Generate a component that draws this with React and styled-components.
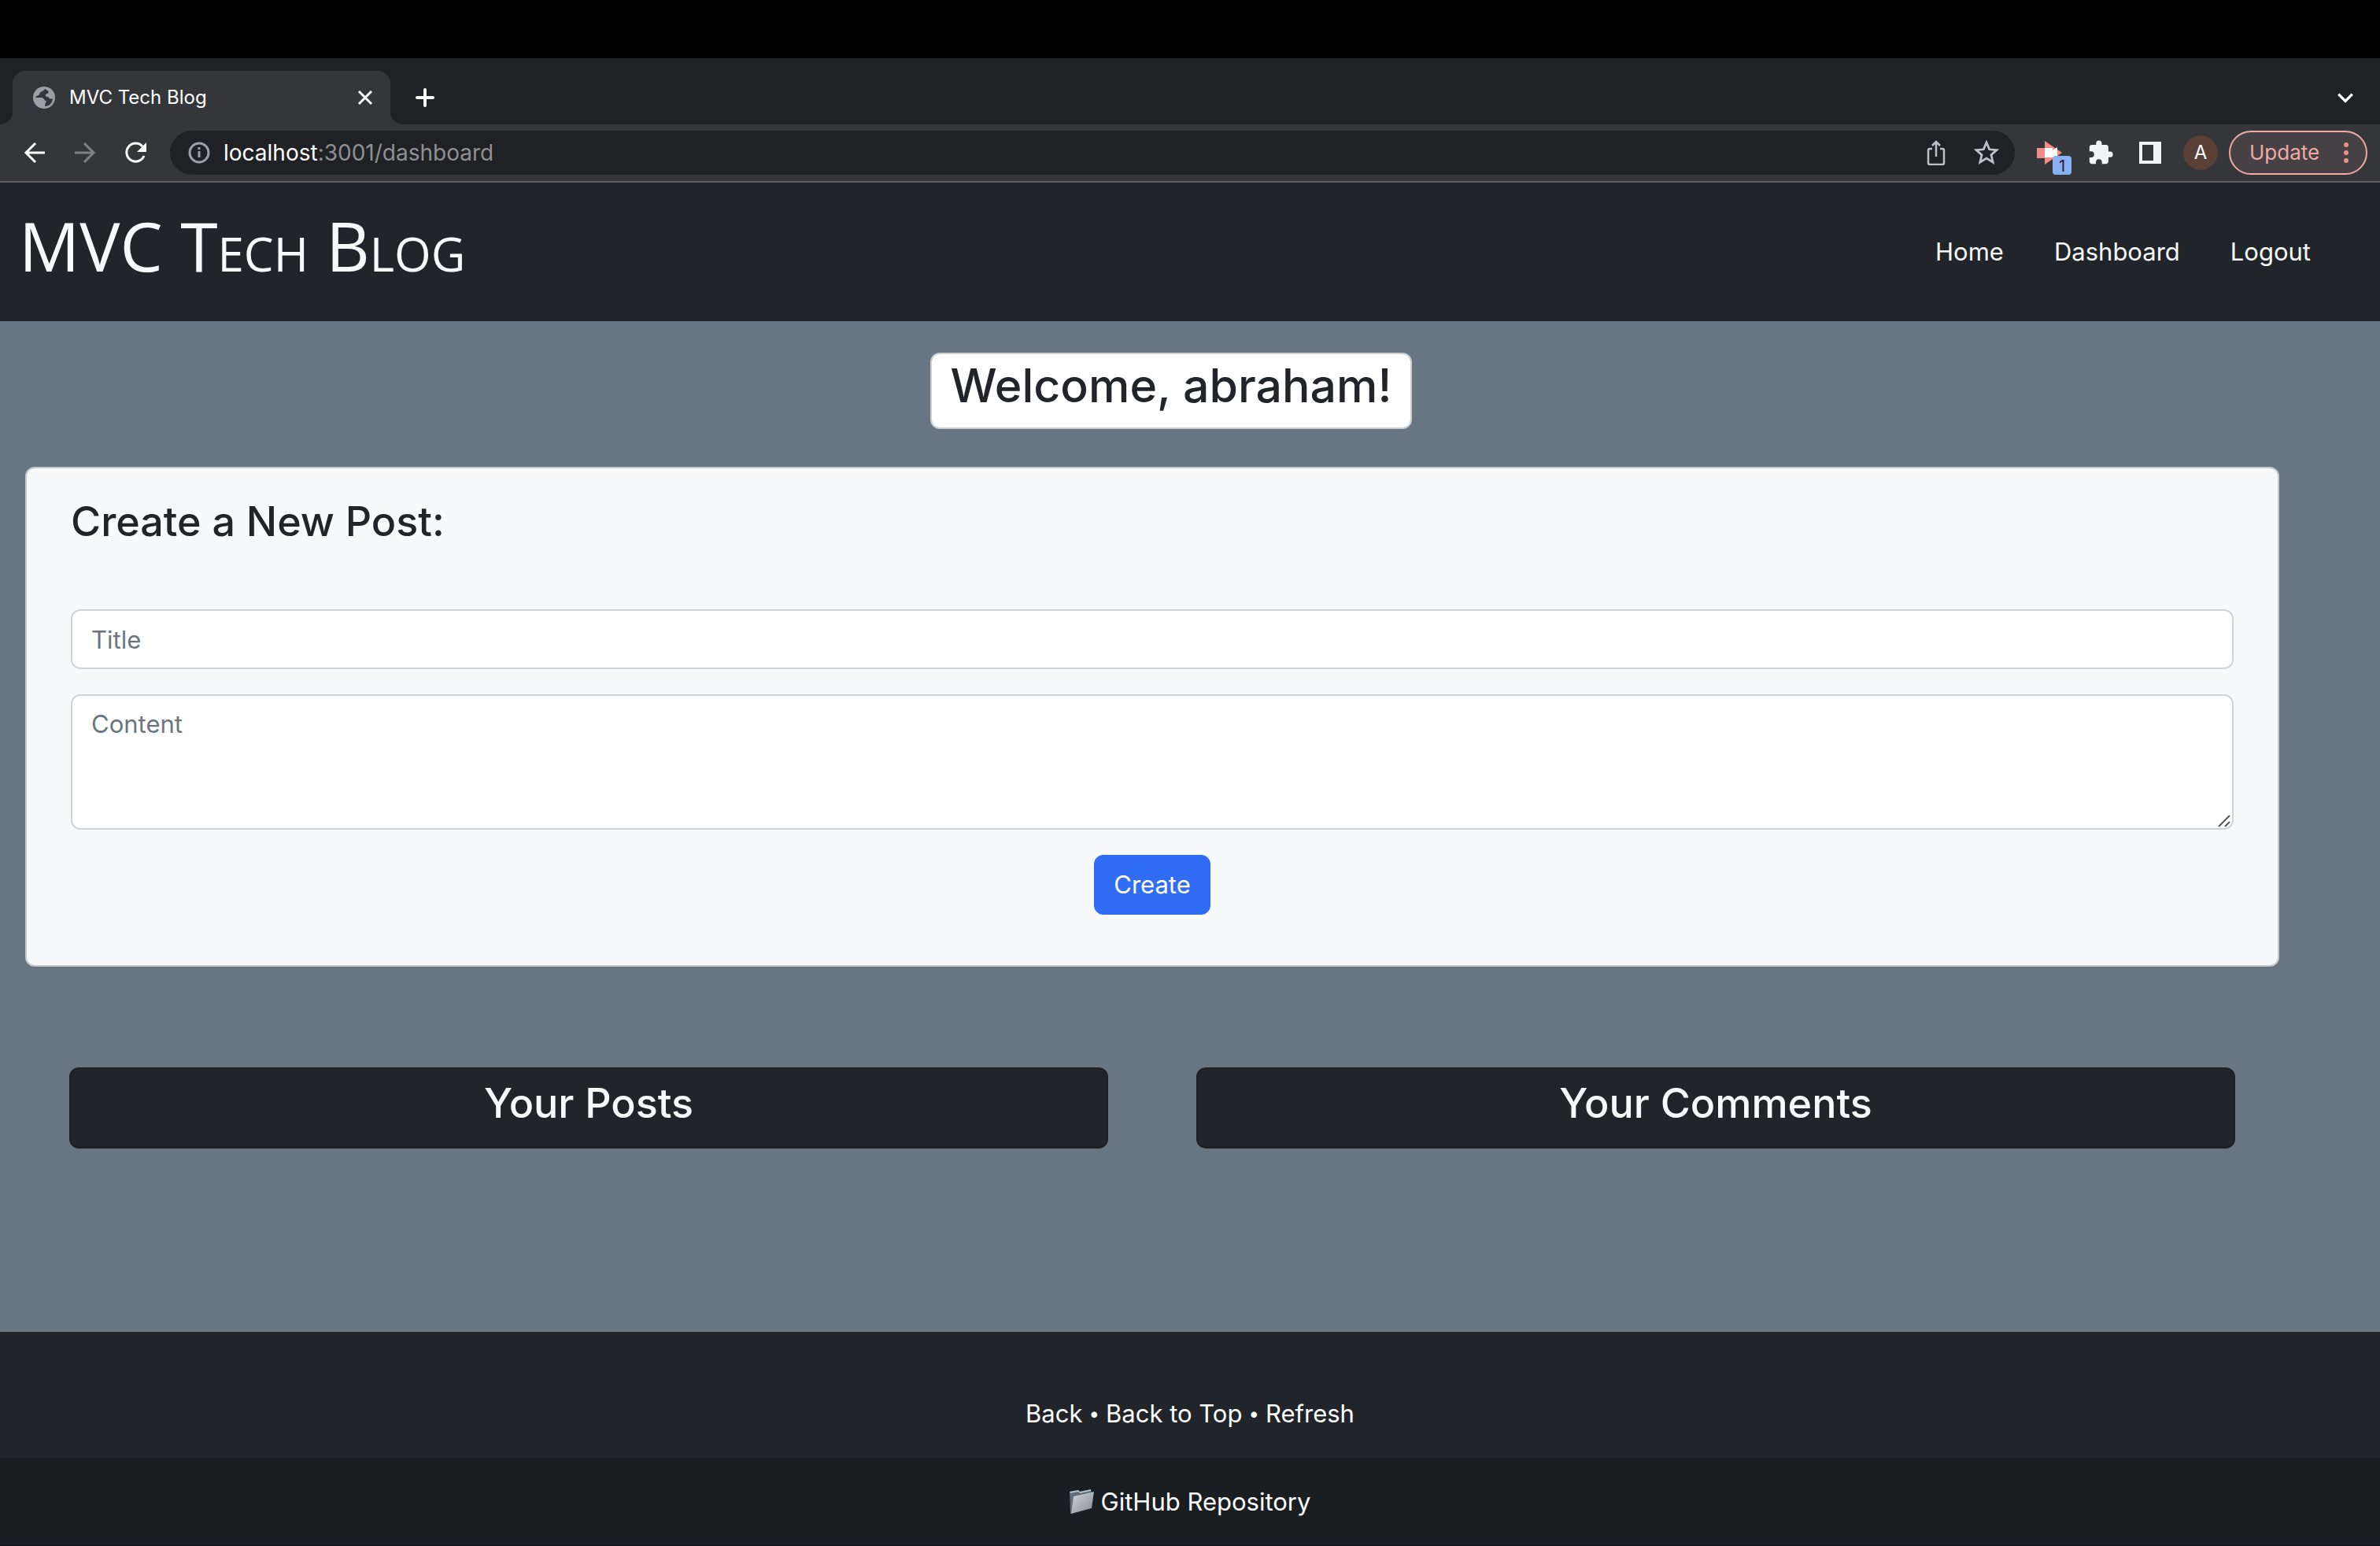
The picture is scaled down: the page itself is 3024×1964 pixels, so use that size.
import React from "react";
import styled, { createGlobalStyle } from "styled-components";

const GlobalStyle = createGlobalStyle`
  * { box-sizing: border-box; }
  html, body, #root { margin: 0; height: 100%; }
  body {
    background: #687683;
    color: #212529;
    font-family: Inter, "Liberation Sans", sans-serif;
    font-size: 31px;
    line-height: 48px;
  }
  h1, h2, p { margin: 0; }
  a { color: inherit; text-decoration: none; }
  button { font: inherit; color: inherit; border: 0; padding: 0; background: none; cursor: pointer; }
`;

const Screen = styled.div`
  min-height: 100%;
  display: flex;
  flex-direction: column;
  border-top: 74px solid #000;
`;

/* ---- browser frame ---- */

const TabStrip = styled.div`
  display: flex;
  align-items: center;
  height: 84px;
  padding: 16px 30px 0 16px;
  background: #202124;
`;

const Tab = styled.div`
  position: relative;
  display: flex;
  align-items: center;
  gap: 18px;
  align-self: stretch;
  width: 480px;
  padding: 0 16px 0 26px;
  border-radius: 16px 16px 0 0;
  background: #35363a;
  color: #fff;
  font-size: 24px;

  &::before, &::after {
    content: "";
    position: absolute;
    bottom: 0;
    width: 16px;
    height: 16px;
  }
  &::before {
    right: 100%;
    background: radial-gradient(circle at 0 0, #202124 16px, #35363a 16px);
  }
  &::after {
    left: 100%;
    background: radial-gradient(circle at 100% 0, #202124 16px, #35363a 16px);
  }
`;

const TabTitle = styled.span`
  flex: 1;
`;

const IconButton = styled.button`
  display: flex;
  color: ${(p) => p.$color || "#fff"};
`;

const NewTab = styled(IconButton)`
  margin-left: 30px;
`;

const TabSearch = styled(IconButton)`
  margin-left: auto;
`;

const Toolbar = styled.div`
  display: flex;
  align-items: center;
  height: 74px;
  padding: 0 16px 0 28px;
  background: #35363a;
  border-bottom: 2px solid #5f6063;
`;

const NavButtons = styled.div`
  display: flex;
  gap: 32px;
  margin-right: 28px;
`;

const Omnibox = styled.div`
  flex: 1;
  display: flex;
  align-items: center;
  gap: 14px;
  height: 56px;
  padding: 0 20px 0 22px;
  border-radius: 28px;
  background: #202124;
  color: #9aa0a6;
`;

const Address = styled.a`
  flex: 1;
  color: #8f9093;
  font-size: 28px;
`;

const Host = styled.span`
  color: #fff;
`;

const OmniActions = styled.div`
  display: flex;
  gap: 32px;
`;

const Extensions = styled.div`
  display: flex;
  align-items: center;
  gap: 32px;
  margin: 0 14px 0 28px;
`;

const ExtensionButton = styled(IconButton)`
  position: relative;
`;

const Badge = styled.span`
  position: absolute;
  right: -12px;
  bottom: -12px;
  width: 24px;
  height: 24px;
  border-radius: 4px;
  background: #8ab0f4;
  color: #202124;
  font-size: 20px;
  line-height: 26px;
  text-align: center;
`;

const Avatar = styled.button`
  width: 44px;
  height: 44px;
  margin-left: -4px;
  border-radius: 50%;
  background: #5a4036;
  color: #fff;
  font-size: 24px;
  line-height: 44px;
`;

const UpdateButton = styled.button`
  display: flex;
  align-items: center;
  justify-content: space-between;
  width: 176px;
  height: 56px;
  padding: 0 22px 0 24px;
  border: 2px solid #f0aaa4;
  border-radius: 28px;
  background: #454144;
  color: #f0aaa4;
  font-size: 26px;
`;

/* ---- blog page ---- */

const Header = styled.header`
  display: flex;
  align-items: center;
  justify-content: space-between;
  height: 176px;
  padding: 0 88px 0 24px;
  background: #212529;
  color: #f8f9fa;
`;

const Brand = styled.h1`
  font-family: "Open Sans", "Noto Sans", sans-serif;
  font-size: 86px;
  font-weight: 500;
  font-variant: small-caps;
  line-height: 112px;
  padding-bottom: 16px;
`;

const SiteNav = styled.nav`
  display: flex;
  gap: 64px;
`;

const Main = styled.main`
  flex: 1;
  display: flex;
  flex-direction: column;
  padding: 40px 128px 0 32px;
`;

const Greeting = styled.h1`
  align-self: center;
  margin: 0 0 48px 48px;
  height: 97px;
  padding: 0 24px;
  border: 2px solid #ccced0;
  border-radius: 12px;
  background: #fff;
  font-size: 59px;
  font-weight: 500;
  line-height: 80px;
`;

const PostForm = styled.form`
  display: flex;
  flex-direction: column;
  gap: 32px;
  padding: 32px 56px 64px;
  border: 2px solid #c8cacc;
  border-radius: 12px;
  background: #f8f9fa;
`;

const FormTitle = styled.h2`
  margin-bottom: 43px;
  font-size: 52px;
  font-weight: 500;
  line-height: 72px;
`;

const fieldStyles = `
  display: block;
  width: 100%;
  margin: 0;
  padding: 12px 24px;
  border: 2px solid #ced4da;
  border-radius: 12px;
  background: #fff;
  color: #212529;
  font: inherit;
  &::placeholder { color: #6c757d; opacity: 1; }
`;

const TextField = styled.input`
  ${fieldStyles}
  height: 76px;
`;

const ContentField = styled.textarea`
  ${fieldStyles}
  height: 172px;
  resize: none;
`;

const ContentWrap = styled.div`
  position: relative;
`;

const Grip = styled.svg`
  position: absolute;
  right: 4px;
  bottom: 3px;
`;

const CreateButton = styled.button`
  align-self: center;
  padding: 14px 25px;
  border-radius: 12px;
  background: #316cf4;
  color: #fff;
`;

const Columns = styled.div`
  display: grid;
  grid-template-columns: 1fr 1fr;
  gap: 112px;
  padding: 128px 56px;
`;

const ColumnTitle = styled.h2`
  height: 103px;
  border: 2px solid #1c1f23;
  border-radius: 12px;
  background: #212529;
  color: #f8f9fa;
  font-size: 52px;
  font-weight: 500;
  line-height: 88px;
  text-align: center;
`;

const FooterLinks = styled.nav`
  display: flex;
  justify-content: center;
  gap: 8px;
  padding: 80px 0 32px;
  background: #212529;
  color: #fff;
`;

const Dot = styled.span`
  font-size: 24px;
`;

const Repository = styled.div`
  display: flex;
  align-items: center;
  justify-content: center;
  height: 112px;
  border-bottom: 1px solid #120c14;
  background: #1a1e21;
  color: #fff;
`;

const RepoLink = styled.a`
  display: flex;
  align-items: center;
  gap: 9px;
`;

const Icon = ({ size = 32, children, ...rest }) => (
  <svg width={size} height={size} viewBox="0 0 32 32" fill="none" stroke="currentColor" strokeWidth="3" aria-hidden="true" {...rest}>
    {children}
  </svg>
);

export default function App() {
  return (
    <>
      <GlobalStyle />
      <Screen>
        <TabStrip>
          <Tab>
            <svg width="28" height="28" viewBox="0 0 28 28" aria-hidden="true">
              <circle cx="14" cy="14" r="14" fill="#9aa0a6" />
              <path d="M15 3C14 6 8 6 8 10c-1 2-4 1-5 4h8c3 0 2 4 5 4 1 2-1 3-1 7 6 0 10-5 10-10-2 1-5 1-5-2-2 1-5-1-4-3 1-1 3-1 4-3-1-2-3-3-5-4z" fill="#35363a" />
              <path d="M3 14h7c4 0 3 3 6 4 2 2-2 3-2 7C7 25 3 20 3 14z" fill="#9aa0a6" />
            </svg>
            <TabTitle>MVC Tech Blog</TabTitle>
            <IconButton aria-label="Close tab">
              <Icon><path d="M8 8l16 16M24 8L8 24" /></Icon>
            </IconButton>
          </Tab>
          <NewTab aria-label="New tab">
            <Icon strokeWidth="4" strokeLinecap="round"><path d="M14 6v20M4 16h20" /></Icon>
          </NewTab>
          <TabSearch aria-label="Search tabs">
            <Icon size={28}><path d="M6 11l10 10 10-10" strokeWidth="4" /></Icon>
          </TabSearch>
        </TabStrip>

        <Toolbar>
          <NavButtons>
            <IconButton aria-label="Back"><Icon><path d="M29 16H5M17 4L5 16l12 12" /></Icon></IconButton>
            <IconButton aria-label="Forward" $color="#7f8083"><Icon><path d="M3 16h24M15 4l12 12-12 12" /></Icon></IconButton>
            <IconButton aria-label="Reload">
              <Icon><path d="M27 20A11.500 11.500 0 1 1 25 8" /><path d="M30 3v12H18z" fill="currentColor" stroke="none" /></Icon>
            </IconButton>
          </NavButtons>
          <Omnibox>
            <Icon>
              <circle cx="15" cy="16" r="12" /><path d="M15 14v8M15 9v3" />
            </Icon>
            <Address href="#dashboard"><Host>localhost</Host>:3001/dashboard</Address>
            <OmniActions>
              <IconButton aria-label="Share" $color="#bdc1c6">
                <Icon strokeWidth="2.500">
                  <path d="M11 11H8q-2 0-2 2v16q0 2 2 2h16q2 0 2-2V13q0-2-2-2h-3M16 21V2M11 7l5-5 5 5" />
                </Icon>
              </IconButton>
              <IconButton aria-label="Bookmark this page" $color="#bdc1c6">
                <Icon><path d="M16 3l3.700 8.800 9.300.8-7 6.200 2.100 9.200-8.100-4.900L7.900 28 10 18.800 3 12.600l9.300-.8z" strokeWidth="2.800" /></Icon>
              </IconButton>
            </OmniActions>
          </Omnibox>
          <Extensions>
            <ExtensionButton aria-label="Recorder extension">
              <Icon stroke="none">
                <path d="M0 10h10V1l22 15-22 15v-8H0z" fill="#f28b86" />
                <path d="M10 10h10v3l6-4v13H10z" fill="#fff" />
              </Icon>
              <Badge>1</Badge>
            </ExtensionButton>
            <IconButton aria-label="Extensions" $color="#f1f3f4">
              <svg width="34" height="34" viewBox="0 0 24 24" fill="currentColor" aria-hidden="true">
                <path d="M20.500 11H19V7c0-1.100-.9-2-2-2h-4V3.500a2.500 2.500 0 0 0-5 0V5H4c-1.100 0-2 .9-2 2v3.800h1.500a2.700 2.700 0 0 1 0 5.400H2V20c0 1.100.9 2 2 2h3.800v-1.500a2.700 2.700 0 0 1 5.400 0V22H17c1.100 0 2-.9 2-2v-4h1.500a2.500 2.500 0 0 0 0-5z" />
              </svg>
            </IconButton>
            <IconButton aria-label="Side panel" $color="#f1f3f4">
              <svg width="28" height="28" viewBox="0 0 28 28" aria-hidden="true">
                <path d="M0 0h28v28H0zM4 4v20h14V4z" fill="currentColor" fillRule="evenodd" />
              </svg>
            </IconButton>
            <Avatar>A</Avatar>
          </Extensions>
          <UpdateButton>
            Update
            <svg width="6" height="28" viewBox="0 0 6 28" fill="#ee8f84" aria-hidden="true">
              <circle cx="3" cy="4" r="3" /><circle cx="3" cy="14" r="3" /><circle cx="3" cy="24" r="3" />
            </svg>
          </UpdateButton>
        </Toolbar>

        <Header>
          <Brand>MVC Tech Blog</Brand>
          <SiteNav>
            <a href="#home">Home</a>
            <a href="#dashboard">Dashboard</a>
            <a href="#logout">Logout</a>
          </SiteNav>
        </Header>

        <Main>
          <Greeting>Welcome, abraham!</Greeting>
          <PostForm onSubmit={(e) => e.preventDefault()}>
            <FormTitle>Create a New Post:</FormTitle>
            <TextField aria-label="Title" placeholder="Title" />
            <ContentWrap>
              <ContentField aria-label="Content" placeholder="Content" />
              <Grip width="16" height="16" viewBox="0 0 16 16" stroke="#555" strokeWidth="2" aria-hidden="true">
                <path d="M1 15L15 1M9 15l6-6" />
              </Grip>
            </ContentWrap>
            <CreateButton>Create</CreateButton>
          </PostForm>
          <Columns>
            <ColumnTitle>Your Posts</ColumnTitle>
            <ColumnTitle>Your Comments</ColumnTitle>
          </Columns>
        </Main>

        <footer>
          <FooterLinks>
            <a href="#back">Back</a>
            <Dot>•</Dot>
            <a href="#top">Back to Top</a>
            <Dot>•</Dot>
            <a href="#refresh">Refresh</a>
          </FooterLinks>
          <Repository>
            <RepoLink href="#repository">
              <svg width="31" height="31" viewBox="0 0 31 31" aria-hidden="true">
                <defs>
                  <linearGradient id="folder" x1="0" y1="0" x2="1" y2="1">
                    <stop offset="0" stopColor="#d3d7dc" /><stop offset="1" stopColor="#868c95" />
                  </linearGradient>
                </defs>
                <path d="M0 3l11-2 2 2 14-3 1 4L4 30l-3 1z" fill="#5d6c78" />
                <path d="M0 3l11-2 2 2 14-3v2L13 5l-2-2L1 5z" fill="#b4bec5" />
                <path d="M5 9l26-6-3 21L2 31z" fill="url(#folder)" />
              </svg>
              GitHub Repository
            </RepoLink>
          </Repository>
        </footer>
      </Screen>
    </>
  );
}
